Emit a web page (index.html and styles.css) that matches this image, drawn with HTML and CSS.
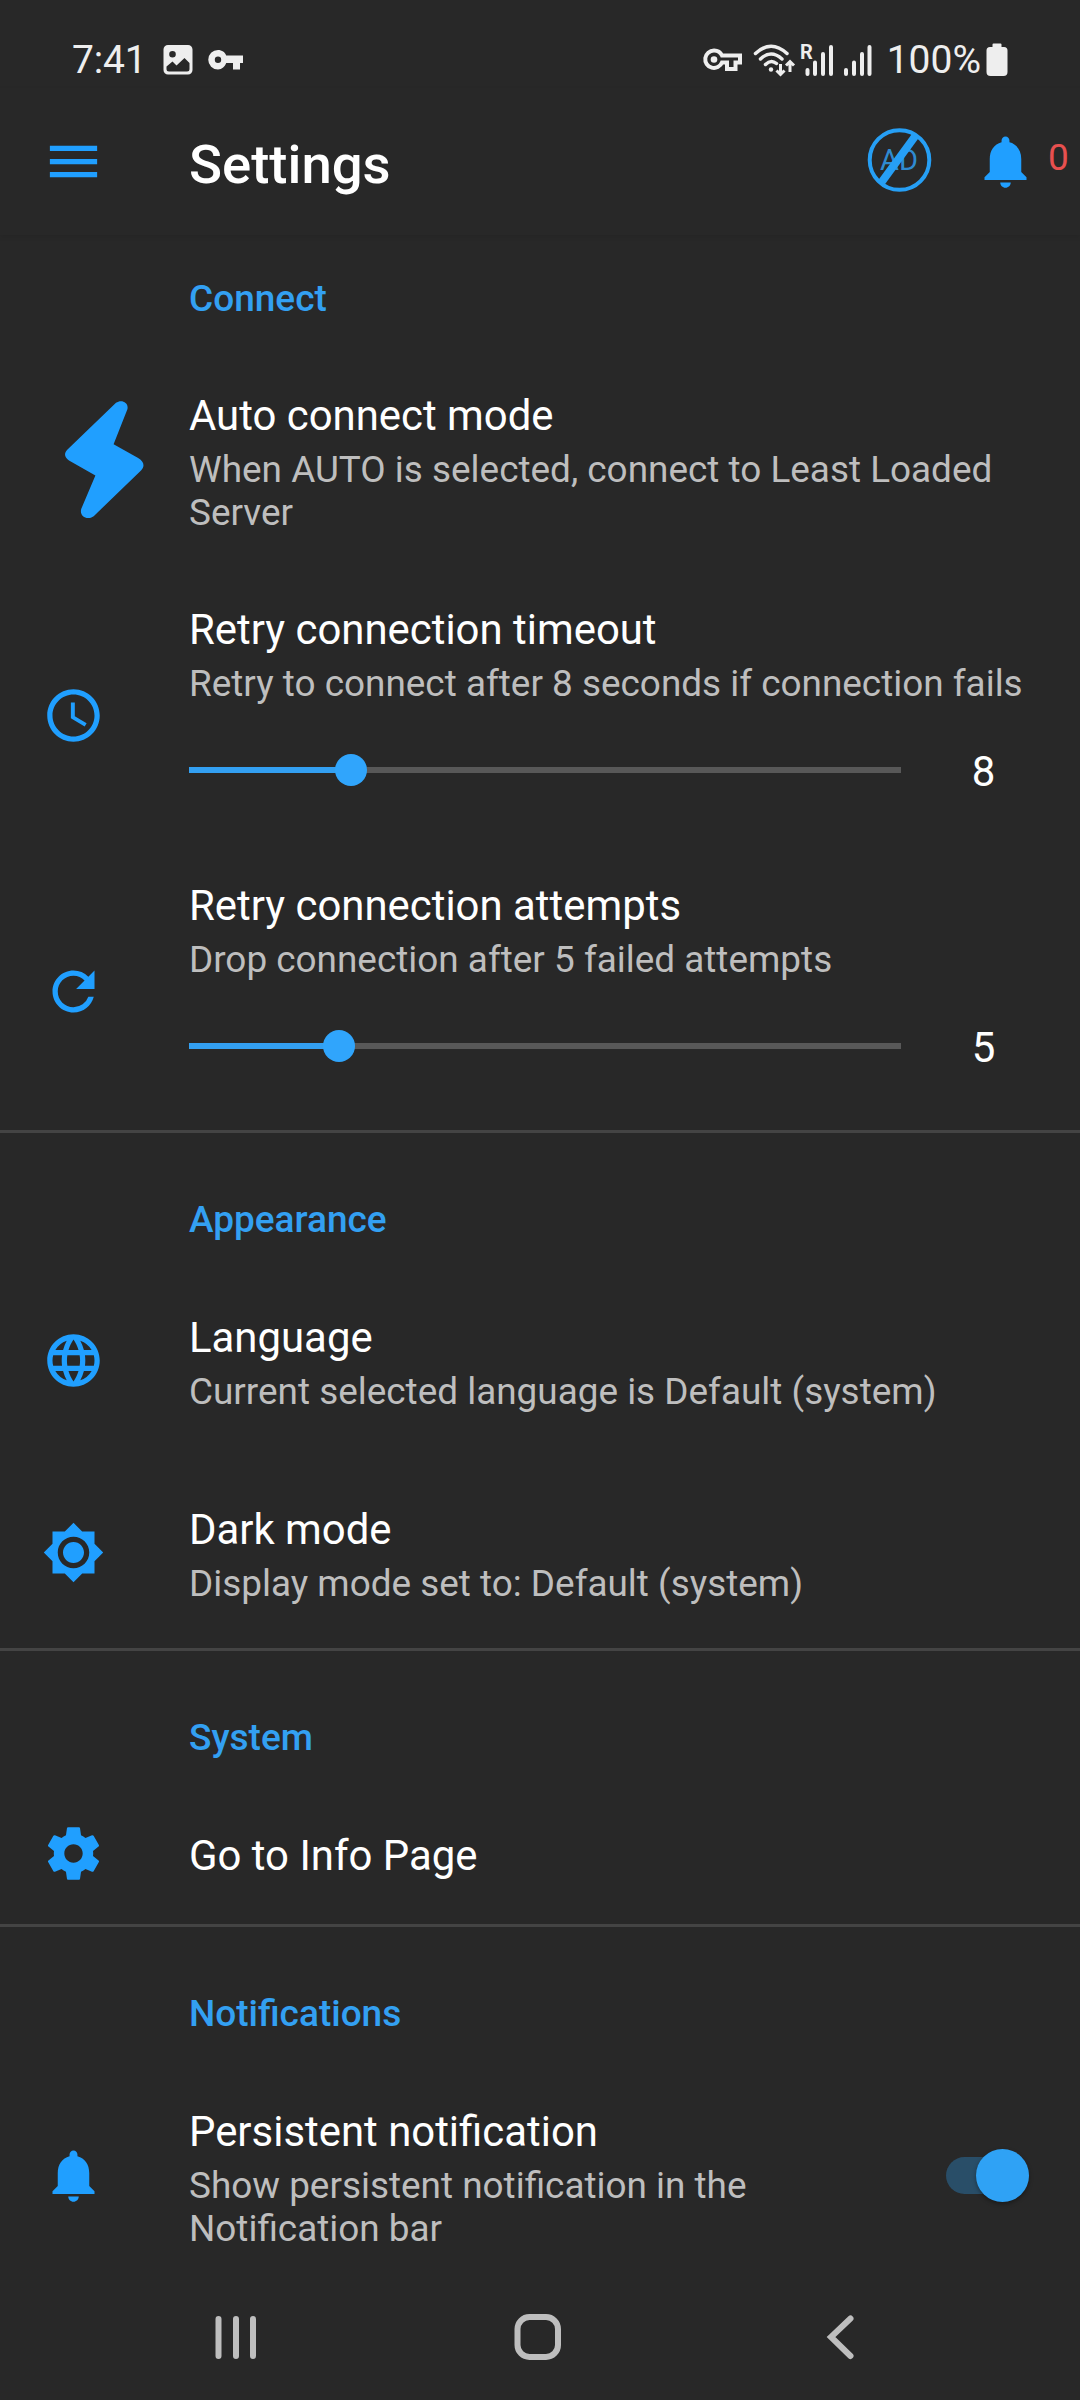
FILE: index.html
```html
<!DOCTYPE html>
<html lang="en">
<head>
  <meta charset="UTF-8" />
  <meta name="viewport" content="width=device-width, initial-scale=1.0"/>
  <title>Settings</title>
  <link rel="stylesheet" href="styles.css">
</head>
<body>
  <!-- Status bar -->
  <div class="status-bar">
    <span class="time">7:41</span>
    <svg class="st-image" width="30" height="30" viewBox="0 0 30 30"><path fill-rule="evenodd" d="M5 0h20a4.500 4.500 0 0 1 4.500 4.500v20.500a4.500 4.500 0 0 1-4.500 4.500H5A4.500 4.500 0 0 1 .5 25V4.500A4.500 4.500 0 0 1 5 0zM9.500 6a3.300 3.300 0 1 0 0 6.600 3.300 3.300 0 0 0 0-6.600zM3.500 21.500V24a2.500 2.500 0 0 0 2.500 2.500h18a2.500 2.500 0 0 0 2.500-2.500v-6L21.500 13l-8 7.500-4-4z"/></svg>
    <svg class="st-key" width="36" height="22" viewBox="0 0 36 22"><path fill-rule="evenodd" d="M10 1c4 0 7 2.300 8.200 5.500H35V14h-3v6.500h-7V14h-6.800C17 17.500 14 20.500 10 20.500A9.700 9.700 0 0 1 10 1zm0 6.500a3.200 3.200 0 1 0 0 6.400 3.200 3.200 0 0 0 0-6.400z"/></svg>
    <div class="status-right">
      <svg class="st-vpn" width="40" height="26" viewBox="0 0 40 26"><path class="line" d="M11 3.500a8.700 8.700 0 1 0 8 12h5v6.500h8.500V15.500H37V8.500H19a8.700 8.700 0 0 0-8-5z"/><circle cx="11" cy="12.500" r="3.300"/></svg>
      <svg class="st-wifi" width="44" height="34" viewBox="0 0 44 34"><path class="line" d="M2.500 10.500Q18-4 34 10.500M7.500 16Q18 6 29 16M12.500 21.500Q18 16 23.500 20.500"/><circle cx="18" cy="26.500" r="2.200"/><path class="arrows" d="M27.500 21v10M23.500 27.500l4 4 4-4M37 29V19M33 22.500l4-4 4 4"/></svg>
      <svg class="st-signal" width="34" height="34" viewBox="0 0 34 34"><text x="0" y="16">R</text><path class="bars" d="M7.500 27v4M15 19.500v11.500M23 11v20M31 4v27"/></svg>
      <svg class="st-signal2" width="30" height="34" viewBox="0 0 30 34"><path class="bars" d="M3 27v4M11 19.500v11.500M19 11v20M26.500 4v27"/></svg>
      <span class="percent">100%</span>
      <svg class="st-battery" width="22" height="34" viewBox="0 0 22 34"><path d="M6.500 1.500Q6.500.5 7.500.5h7q1 0 1 1V4h2.500a3.500 3.500 0 0 1 3.500 3.500V29a4 4 0 0 1-4 4h-13a4 4 0 0 1-4-4V7.500A3.500 3.500 0 0 1 4 4h2.500z"/></svg>
    </div>
  </div>

  <!-- Toolbar -->
  <header class="toolbar">
    <svg class="icon" viewBox="0 0 24 24"><path d="M3 18h18v-2H3v2zm0-5h18v-2H3v2zm0-7v2h18V6H3z"/></svg>
    <h1>Settings</h1>
    <svg class="no-ads" width="64" height="64" viewBox="0 0 64 64">
      <text x="31" y="42" text-anchor="middle">AD</text>
      <circle cx="31.500" cy="32" r="29.800"/>
      <path d="M48 7L13 55"/>
    </svg>
    <svg class="icon" viewBox="0 0 24 24"><path d="M12 22c1.100 0 2-.9 2-2h-4c0 1.100.89 2 2 2zm6-6v-5c0-3.070-1.640-5.640-4.500-6.320V4c0-.83-.67-1.500-1.500-1.500s-1.500.67-1.500 1.500v.68C7.630 5.360 6 7.920 6 11v5l-2 2v1h16v-1l-2-2z"/></svg>
    <span class="count">0</span>
  </header>

  <main class="settings">
    <section>
      <h2>Connect</h2>
      <div class="item">
        <div class="item-icon">
          <svg class="bolt" viewBox="0 0 126 126"><path d="M74 5.800C79 2 87 5 85.400 12.200L71.600 47.200l24.100 13.600C103 65 102.500 70 99 73.500l-47.300 45.700C45 124 37 119 39.300 111.800L53.400 78.500 27 63.500C22 60 22 56 25.500 52.500z"/></svg>
        </div>
        <div class="text">
          <div class="title">Auto connect mode</div>
          <div class="summary">When AUTO is selected, connect to Least Loaded Server</div>
        </div>
      </div>

      <div class="item seek">
        <div class="item-icon">
          <svg class="icon" viewBox="0 0 24 24"><path d="M11.990 2C6.470 2 2 6.480 2 12s4.470 10 9.990 10C17.520 22 22 17.520 22 12S17.520 2 11.990 2zM12 20c-4.420 0-8-3.580-8-8s3.580-8 8-8 8 3.580 8 8-3.580 8-8 8zm.5-13H11v6l5.250 3.150.75-1.230-4.500-2.670z"/></svg>
        </div>
        <div class="text">
          <div class="title">Retry connection timeout</div>
          <div class="summary">Retry to connect after 8 seconds if connection fails</div>
          <div class="seek-row">
            <div class="track"><div class="fill" style="width: 162px"></div><div class="thumb"></div></div>
            <span class="value">8</span>
          </div>
        </div>
      </div>

      <div class="item seek">
        <div class="item-icon">
          <svg class="icon" viewBox="0 0 24 24"><path d="M17.650 6.350A7.958 7.958 0 0 0 12 4c-4.420 0-7.990 3.580-7.990 8s3.570 8 7.990 8c3.730 0 6.840-2.550 7.730-6h-2.080A5.990 5.990 0 0 1 12 18c-3.310 0-6-2.690-6-6s2.690-6 6-6c1.660 0 3.140.69 4.220 1.780L13 11h7V4l-2.350 2.350z"/></svg>
        </div>
        <div class="text">
          <div class="title">Retry connection attempts</div>
          <div class="summary">Drop connection after 5 failed attempts</div>
          <div class="seek-row">
            <div class="track"><div class="fill" style="width: 150px"></div><div class="thumb"></div></div>
            <span class="value">5</span>
          </div>
        </div>
      </div>
    </section>

    <section>
      <h2>Appearance</h2>
      <div class="item">
        <div class="item-icon">
          <svg class="icon" viewBox="0 0 24 24"><path d="M11.990 2C6.470 2 2 6.480 2 12s4.470 10 9.990 10C17.520 22 22 17.520 22 12S17.520 2 11.990 2zm6.930 6h-2.950a15.650 15.650 0 0 0-1.380-3.560A8.030 8.030 0 0 1 18.920 8zM12 4.040c.83 1.200 1.480 2.530 1.910 3.960h-3.820c.43-1.430 1.080-2.760 1.910-3.960zM4.260 14C4.100 13.360 4 12.690 4 12s.1-1.360.26-2h3.380c-.08.66-.14 1.320-.14 2s.06 1.340.14 2H4.260zm.82 2h2.950c.32 1.250.78 2.450 1.380 3.560A7.987 7.987 0 0 1 5.080 16zm2.950-8H5.080a7.987 7.987 0 0 1 4.330-3.560A15.650 15.650 0 0 0 8.030 8zM12 19.960c-.83-1.200-1.480-2.530-1.910-3.960h3.820c-.43 1.430-1.080 2.760-1.910 3.960zM14.340 14H9.660c-.09-.66-.16-1.320-.16-2s.07-1.350.16-2h4.680c.09.65.16 1.320.16 2s-.07 1.340-.16 2zm.25 5.560c.6-1.110 1.060-2.310 1.380-3.560h2.950a8.030 8.030 0 0 1-4.330 3.560zM16.360 14c.08-.66.14-1.320.14-2s-.06-1.340-.14-2h3.380c.16.64.26 1.310.26 2s-.1 1.360-.26 2h-3.380z"/></svg>
        </div>
        <div class="text">
          <div class="title">Language</div>
          <div class="summary">Current selected language is Default (system)</div>
        </div>
      </div>

      <div class="item">
        <div class="item-icon">
          <svg class="icon" viewBox="0 0 24 24"><path d="M20 8.690V4h-4.690L12 .69 8.690 4H4v4.690L.69 12 4 15.310V20h4.690L12 23.310 15.310 20H20v-4.690L23.310 12 20 8.690zM12 18c-3.310 0-6-2.690-6-6s2.690-6 6-6 6 2.690 6 6-2.690 6-6 6zm0-10c-2.210 0-4 1.790-4 4s1.790 4 4 4 4-1.790 4-4-1.790-4-4-4z"/></svg>
        </div>
        <div class="text">
          <div class="title">Dark mode</div>
          <div class="summary">Display mode set to: Default (system)</div>
        </div>
      </div>
    </section>

    <section>
      <h2>System</h2>
      <div class="item single">
        <div class="item-icon">
          <svg class="icon" viewBox="0 0 24 24"><path d="M19.430 12.980c.04-.32.07-.64.07-.98s-.03-.66-.07-.98l2.110-1.650c.19-.15.24-.42.12-.64l-2-3.460c-.12-.22-.39-.3-.61-.22l-2.490 1c-.52-.4-1.080-.73-1.690-.98l-.38-2.650C14.460 2.180 14.250 2 14 2h-4c-.25 0-.46.18-.49.42l-.38 2.650c-.61.25-1.170.59-1.690.98l-2.490-1c-.23-.09-.49 0-.61.22l-2 3.460c-.13.22-.07.49.12.64l2.110 1.650c-.04.32-.07.65-.07.98s.03.66.07.98l-2.110 1.650c-.19.15-.24.42-.12.64l2 3.460c.12.22.39.3.61.22l2.490-1c.52.4 1.080.73 1.690.98l.38 2.650c.03.24.24.42.49.42h4c.25 0 .46-.18.49-.42l.38-2.650c.61-.25 1.170-.59 1.690-.98l2.490 1c.23.09.49 0 .61-.22l2-3.460c.12-.22.07-.49-.12-.64l-2.110-1.650zM12 15.500c-1.930 0-3.500-1.570-3.500-3.500s1.570-3.500 3.500-3.500 3.500 1.570 3.500 3.500-1.570 3.500-3.500 3.500z"/></svg>
        </div>
        <div class="text">
          <div class="title">Go to Info Page</div>
        </div>
      </div>
    </section>

    <section>
      <h2>Notifications</h2>
      <div class="item">
        <div class="item-icon">
          <svg class="icon" viewBox="0 0 24 24"><path d="M12 22c1.100 0 2-.9 2-2h-4c0 1.100.89 2 2 2zm6-6v-5c0-3.070-1.640-5.640-4.500-6.320V4c0-.83-.67-1.500-1.500-1.500s-1.500.67-1.500 1.500v.68C7.630 5.360 6 7.920 6 11v5l-2 2v1h16v-1l-2-2z"/></svg>
        </div>
        <div class="text">
          <div class="title">Persistent notification</div>
          <div class="summary">Show persistent notification in the Notification bar</div>
        </div>
        <div class="switch"><div class="knob"></div></div>
      </div>
    </section>
  </main>

  <!-- System navigation -->
  <nav class="nav-bar">
    <svg width="48" height="50" viewBox="0 0 48 50"><path d="M6.500 7v37M24 7v37M41 7v37"/></svg>
    <svg class="home" width="50" height="50" viewBox="0 0 50 50"><rect x="4.500" y="5" width="40.500" height="40" rx="12"/></svg>
    <svg width="34" height="50" viewBox="0 0 34 50"><path d="M27.500 6.500L8 25l19.500 19"/></svg>
  </nav>
</body>
</html>
```

FILE: styles.css
```css
* {
  box-sizing: border-box;
}

body {
  margin: 0;
  width: 1080px;
  height: 2400px;
  overflow: hidden;
  display: flex;
  flex-direction: column;
  background: #282828;
  color: #fff;
  font-family: Roboto, sans-serif;
}

svg {
  display: block;
  flex: none;
  overflow: visible;
}

/* status bar */
.status-bar {
  height: 88px;
  padding: 32px 72px 0 72px;
  display: flex;
  align-items: center;
  color: #eee;
  fill: #eee;
  font-size: 39px;
  line-height: 56px;
}

.time {
  width: 91px;
  letter-spacing: -0.2px;
}

.st-key {
  margin-left: 15px;
}

.status-right {
  margin-left: auto;
  display: flex;
  align-items: center;
}

.status-right .line,
.arrows,
.bars {
  fill: none;
  stroke: #eee;
  stroke-width: 4;
}

.st-wifi {
  margin-left: 10px;
}

.st-wifi .line {
  stroke-width: 3.5;
  stroke-linecap: round;
}

.status-right .arrows {
  stroke-width: 3;
}

.st-signal {
  margin-left: 3px;
}

.st-signal text {
  font-size: 20px;
  font-weight: 700;
}

.bars {
  stroke-linecap: round;
}

.st-signal2 {
  margin-left: 9px;
}

.percent {
  margin-left: 14px;
}

.st-battery {
  margin-left: 5px;
}

/* toolbar */
.toolbar {
  height: 147px;
  padding-left: 42px;
  display: flex;
  align-items: center;
  box-shadow: 0 2px 5px rgba(0, 0, 0, 0.08);
}

.icon {
  width: 63px;
  height: 63px;
  fill: #209fff;
}

.toolbar h1 {
  width: 763px;
  margin: 4px 0 0;
  padding-left: 84px;
  font-size: 54.5px;
  font-weight: 500;
  line-height: 62px;
}

.no-ads {
  margin: -3px 42px 0 0;
}

.no-ads text {
  font-size: 29px;
  fill: #2f8bd0;
}

.no-ads circle,
.no-ads path {
  fill: none;
  stroke: #269ff5;
  stroke-width: 4;
}

.no-ads path {
  stroke-width: 8;
}

.count {
  margin: -8px 0 0 11px;
  font-size: 37px;
  color: #e8504f;
}

/* settings list */
.settings {
  flex: 1;
  min-height: 0;
  overflow: hidden;
}

section {
  border-top: 3px solid #444;
}

section:first-child {
  border-top: none;
}

h2 {
  height: 131px;
  margin: 0;
  padding: 65px 0 0 189px;
  font-size: 37px;
  font-weight: 500;
  line-height: 43px;
  color: #33a0f2;
}

section:first-child h2 {
  height: 107px;
  padding-top: 42px;
}

.item {
  min-height: 192px;
  padding: 0 42px;
  display: flex;
  align-items: center;
}

.item-icon {
  width: 147px;
  flex: none;
}

.bolt {
  width: 126px;
  height: 126px;
  fill: #209fff;
}

.text {
  flex: 1;
  align-self: flex-start;
  padding: 49px 0 43px;
}

.title {
  font-size: 41.9px;
  line-height: 49px;
}

.summary {
  margin-top: 8px;
  font-size: 36.9px;
  line-height: 43px;
  color: #bebebe;
}

.single {
  min-height: 142px;
}

.seek {
  height: 276px;
}

.seek + .seek {
  height: 277px;
}

.seek .text {
  padding: 28px 0 0;
  white-space: nowrap;
}

.seek-row {
  height: 64px;
  margin-top: 33px;
  display: flex;
  align-items: center;
}

.track {
  width: 712px;
  height: 6px;
  display: flex;
  align-items: center;
  background: #585858;
}

.fill {
  height: 6px;
  background: #33a0f2;
}

.thumb {
  width: 32px;
  height: 32px;
  margin-left: -16px;
  flex: none;
  border-radius: 50%;
  background: #30a5fc;
}

.value {
  width: 165px;
  padding-top: 2px;
  margin-right: -28px;
  text-align: center;
  font-size: 42px;
}

.switch {
  width: 83px;
  height: 37px;
  margin: 0 9px 0 90px;
  display: flex;
  align-items: center;
  justify-content: flex-end;
  flex: none;
  border-radius: 19px;
  background: #294e68;
}

.knob {
  width: 53px;
  height: 53px;
  flex: none;
  border-radius: 50%;
  background: #2fa2f5;
  box-shadow: 0 2px 4px rgba(0, 0, 0, 0.35);
}

/* bottom navigation */
.nav-bar {
  height: 126px;
  padding: 0 223px 0 212px;
  display: flex;
  align-items: center;
  justify-content: space-between;
  background: #282828;
}

.nav-bar svg {
  fill: none;
  stroke: #bebebe;
  stroke-width: 6;
  stroke-linecap: round;
}

.nav-bar .home {
  margin-right: 7px;
}
```
